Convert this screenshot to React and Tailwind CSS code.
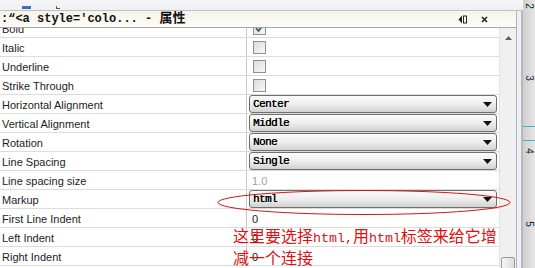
import React from "react";

const rows = [
  { label: "Bold", type: "check", checked: true },
  { label: "Italic", type: "check" },
  { label: "Underline", type: "check" },
  { label: "Strike Through", type: "check" },
  { label: "Horizontal Alignment", type: "select", value: "Center" },
  { label: "Vertical Alignment", type: "select", value: "Middle" },
  { label: "Rotation", type: "select", value: "None" },
  { label: "Line Spacing", type: "select", value: "Single" },
  { label: "Line spacing size", type: "muted", value: "1.0" },
  { label: "Markup", type: "select", value: "html" },
  { label: "First Line Indent", type: "text", value: "0" },
  { label: "Left Indent", type: "text", value: "0" },
  { label: "Right Indent", type: "text", value: "0" },
];

function Checkbox({ checked }) {
  return (
    <div className="ml-[6px] w-[13px] h-[13px] border border-[#8e8f8f] bg-gradient-to-br from-[#dcdcdc] to-[#f8f8f8] flex items-center justify-center">
      {checked && (
        <svg width="11" height="11" viewBox="0 0 11 11">
          <path d="M2 5 L4.5 8 L9 2" fill="none" stroke="#4a5a78" strokeWidth="1.8" />
        </svg>
      )}
    </div>
  );
}

function Select({ value }) {
  return (
    <div className="ml-[2px] mr-[2px] flex-1 h-[18px] rounded-[3px] border border-[#6f6f6f] bg-gradient-to-b from-[#fbfbfb] via-[#eeeeee] to-[#d2d2d2] flex items-center justify-between pl-[3px] pr-[4px]">
      <span className="pt-[1px] font-['Liberation_Mono',monospace] text-[11px] tracking-[-0.6px] text-[#000] [text-shadow:0.3px_0_0_#000]">
        {value}
      </span>
      <svg width="9" height="5" viewBox="0 0 9 5">
        <path d="M0 0 H9 L4.5 5 Z" fill="#111" />
      </svg>
    </div>
  );
}

function Row({ row }) {
  return (
    <div className="flex h-[19px] border-b border-[#dcdcdc]">
      <div className="w-[247px] shrink-0 border-r border-[#c8c8c8] pl-[2px] pt-[2px] flex items-center text-[11px] text-[#1c1c1c] font-['Liberation_Sans',Arial,sans-serif]">
        {row.label}
      </div>
      <div className="flex-1 flex items-center">
        {row.type === "check" && <Checkbox checked={row.checked} />}
        {row.type === "select" && <Select value={row.value} />}
        {row.type === "muted" && (
          <span className="ml-[5px] pt-[2px] text-[11px] text-[#a0a0a0] font-['Liberation_Sans',Arial,sans-serif]">{row.value}</span>
        )}
        {row.type === "text" && (
          <span className="ml-[5px] pt-[2px] text-[11px] text-[#1c1c1c] font-['Liberation_Sans',Arial,sans-serif]">{row.value}</span>
        )}
      </div>
    </div>
  );
}

export default function App() {
  return (
    <div className="relative w-[535px] h-[268px] overflow-hidden bg-white flex flex-col">
      {/* toolbar remnant */}
      <div className="h-[11px] shrink-0 bg-gradient-to-b from-[#f6f6f6] to-[#eef0f3] border-b border-[#b9c2cf] flex items-end">
        <div className="ml-[22px] mb-[1px] w-[9px] h-[3px] bg-[#3c6fc4]" />
        <div className="ml-[25px] mb-[1px] w-[4px] h-[3px] border-b border-l border-[#555]" />
      </div>

      <div className="flex flex-1 min-h-0">
        {/* properties panel */}
        <div className="w-[517px] shrink-0 flex flex-col border-r border-[#a9b6c8]">
          <div className="h-[17px] shrink-0 bg-gradient-to-b from-[#f7f3e8] to-[#fdfcf8] border-b border-[#a6a6a6] flex items-end justify-between pr-[28px] relative z-10">
            <span className="pl-[1px] leading-[15px] font-['Liberation_Mono','Noto_Sans_CJK_SC',monospace] font-bold text-[12px] text-[#111] whitespace-nowrap">
              :“&lt;a style='colo... - <span className="font-['Noto_Sans_CJK_SC',sans-serif] text-[13px]">属性</span>
            </span>
            <div className="flex items-center gap-[14px] self-center">
              <svg width="9" height="9" viewBox="0 0 9 9">
                <path d="M4 0.5 L0.5 4.5 L4 8.5 Z" fill="#222" />
                <rect x="5.5" y="1" width="3" height="7" fill="none" stroke="#222" strokeWidth="1" />
              </svg>
              <svg width="7" height="7" viewBox="0 0 7 7">
                <path d="M1 1 L6 6 M6 1 L1 6" stroke="#222" strokeWidth="1.6" />
              </svg>
            </div>
          </div>

          <div className="flex flex-1 min-h-0">
            <div className="flex-1 overflow-hidden">
              <div className="-mt-[9px]">
                {rows.map((r) => (
                  <Row key={r.label} row={r} />
                ))}
              </div>
            </div>
            {/* scrollbar */}
            <div className="w-[17px] shrink-0 bg-[#f0f0f0] border-l border-[#e2e2e2] flex flex-col items-center justify-between">
              <svg width="7" height="4" viewBox="0 0 7 4" className="mt-[8px]">
                <path d="M0 4 L3.5 0 L7 4 Z" fill="#606060" />
              </svg>
              <div className="w-[14px] h-[13px] mb-[-2px] rounded-[2px] border border-[#9a9a9a] bg-gradient-to-r from-[#f6f6f6] to-[#dcdcdc]" />
            </div>
          </div>
        </div>

        {/* ruler area */}
        <div className="w-[6px] shrink-0 bg-[#eef0f4] border-r-2 border-[#b8b8b8]" />
        <div className="flex-1 relative -mt-[11px] bg-gradient-to-r from-[#cfcfcf] to-[#e6e6e6] flex flex-col items-center text-[10px] font-['Liberation_Sans',Arial,sans-serif] text-[#222]">
          <span className="rotate-90 mt-[1px] leading-[10px]">2</span>
          <span className="rotate-90 mt-[62px] leading-[10px]">3</span>
          <span className="rotate-90 mt-[63px] leading-[10px]">4</span>
          <span className="rotate-90 mt-[63px] leading-[10px]">5</span>
          <div className="absolute left-0 right-0 top-[126px] h-px bg-[#3cb8c0]" />
          <div className="absolute left-0 right-0 top-[140px] h-px bg-[#3cb8c0]" />
        </div>
      </div>

      {/* red annotation */}
      <svg className="absolute left-[216px] top-[189px]" width="296" height="27" viewBox="0 0 296 27">
        <ellipse cx="148" cy="13.5" rx="146" ry="12" fill="none" stroke="#d01818" strokeWidth="1" />
      </svg>
      <div className="absolute left-[233px] top-[226px] w-[280px] text-[16px] leading-[18px] text-[#e01010] font-['Noto_Sans_CJK_SC',sans-serif]">
        这里要选择<span className="font-['Liberation_Mono',monospace] text-[13.3px]">html,</span>用<span className="font-['Liberation_Mono',monospace] text-[13.3px]">html</span>标签来给它增
        <br />
        减一个连接
      </div>
    </div>
  );
}
